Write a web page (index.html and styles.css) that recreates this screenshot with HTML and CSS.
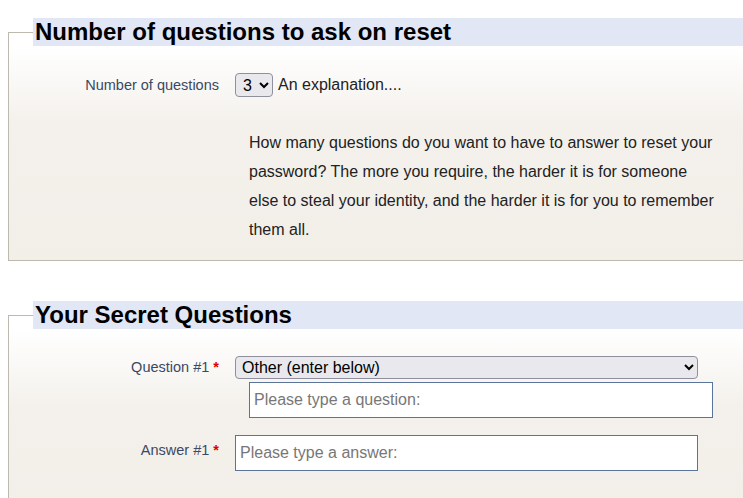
FILE: index.html
```html
<!DOCTYPE html>
<html>
<head>
<meta charset="utf-8">
<link rel="stylesheet" href="styles.css">
</head>
<body>
<form class="page">
  <fieldset class="box">
    <legend class="box-title">Number of questions to ask on reset</legend>
    <div class="row">
      <label class="row-label" for="nq">Number of questions</label>
      <div class="row-control">
        <select id="nq" class="sel sel-small"><option>3</option></select>
        <span class="explain">An explanation....</span>
      </div>
    </div>
    <p class="help">How many questions do you want to have to answer to reset your password? The more you require, the harder it is for someone else to steal your identity, and the harder it is for you to remember them all.</p>
  </fieldset>

  <fieldset class="box box-second">
    <legend class="box-title">Your Secret Questions</legend>
    <div class="row">
      <label class="row-label" for="q1">Question #1 <span class="req">*</span></label>
      <div class="row-control column">
        <select id="q1" class="sel sel-wide"><option>Other (enter below)</option></select>
        <input class="txt txt-indent" type="text" placeholder="Please type a question:">
      </div>
    </div>
    <div class="row row-answer">
      <label class="row-label" for="a1">Answer #1 <span class="req">*</span></label>
      <div class="row-control">
        <input id="a1" class="txt" type="text" placeholder="Please type a answer:">
      </div>
    </div>
  </fieldset>
</form>
</body>
</html>
```

FILE: styles.css
```css
html, body {
  margin: 0;
  padding: 0;
  background: #ffffff;
}
body {
  font-family: "Liberation Sans", Arial, sans-serif;
  color: #222222;
  overflow: hidden;
}
.page {
  padding: 18px 0 0 8px;
}
.box {
  margin: 0;
  width: 700px;
  padding: 0 0 16px 24px;
  border: 1px solid #bdb9af;
  background: linear-gradient(to bottom, #ffffff 0px, #ffffff 14px, #f4f1ec 90px, #f2efe9 100%);
}
.box-second {
  margin-top: 40px;
  height: 200px;
}
.box-title {
  box-sizing: border-box;
  width: 710px;
  height: 28px;
  padding: 0 2px;
  background: #e1e7f5;
  font-size: 24px;
  font-weight: bold;
  line-height: 28px;
  color: #000000;
}
.row {
  display: flex;
  align-items: flex-start;
  gap: 16px;
  margin-top: 27px;
}
.row-answer {
  margin-top: 17px;
}
.row-label {
  width: 186px;
  flex: none;
  text-align: right;
  font-size: 14.5px;
  line-height: 25px;
  color: #3b4964;
}
.box-second .row-label {
  line-height: 23px;
}
.row-answer .row-label {
  line-height: 31px;
}
.req {
  color: #e00000;
  font-weight: bold;
}
.row-control {
  display: flex;
  align-items: center;
}
.column {
  flex-direction: column;
  align-items: flex-start;
  gap: 3px;
}
.sel {
  font-family: "Liberation Sans", Arial, sans-serif;
  font-size: 16px;
  color: #000000;
  background-color: #e9e9ed;
  border: 1px solid #8f8f9d;
  border-radius: 4px;
  margin: 0;
}
.sel-small {
  width: 38px;
  height: 24px;
  padding: 0 0 0 3px;
}
.sel-wide {
  width: 463px;
  height: 23px;
  padding: 0 0 0 2px;
}
.explain {
  font-size: 16px;
  margin-left: 5px;
  color: #222222;
}
.txt {
  box-sizing: border-box;
  width: 463px;
  height: 36px;
  margin: 0;
  padding: 0 4px;
  border: 1px solid #5b7499;
  background: #ffffff;
  font-family: "Liberation Sans", Arial, sans-serif;
  font-size: 16px;
  color: #222222;
}
.txt::placeholder {
  color: #777777;
}
.txt-indent {
  width: 464px;
  margin-left: 14px;
}
.help {
  margin: 30px 0 0 216px;
  width: 467px;
  font-size: 16px;
  line-height: 29px;
  color: #222222;
}
```
